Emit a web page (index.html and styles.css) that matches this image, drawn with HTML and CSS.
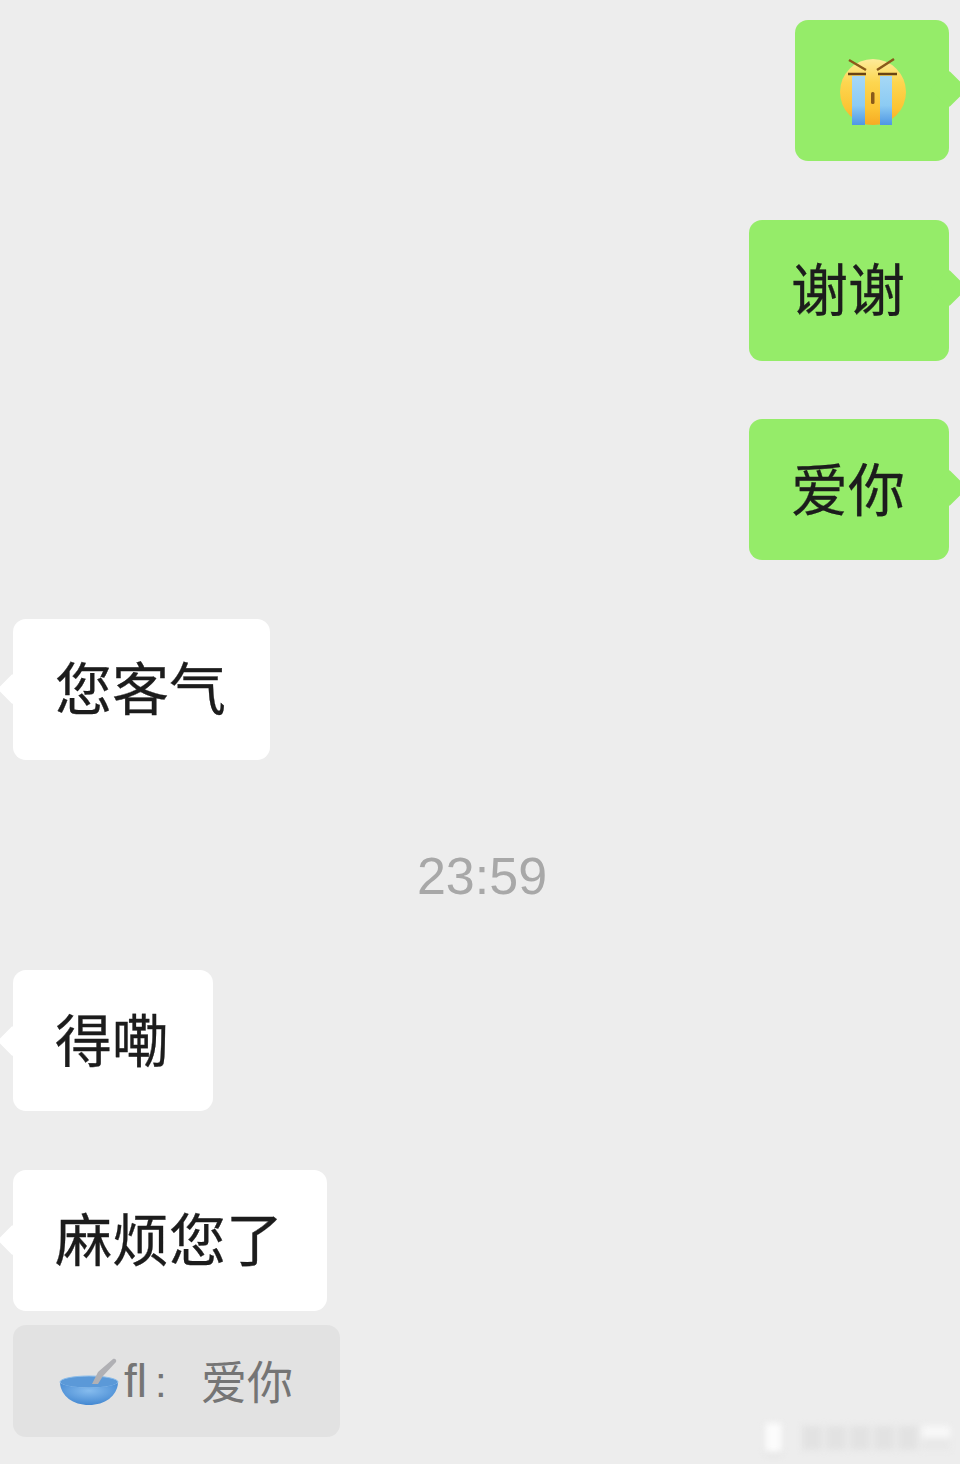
FILE: index.html
```html
<!DOCTYPE html>
<html lang="zh">

<head>
    <title>Chat</title>
    <link rel="stylesheet" href="styles.css">
</head>

<body>

    <div class="chat">
        <div class="row row-me">
            <div class="bubble bubble-me bubble-emoji">
                <svg class="emoji" viewBox="0 0 70 72" width="70" height="72">
                    <defs>
                        <linearGradient id="face" x1="0" y1="0" x2="0" y2="1">
                            <stop offset="0" stop-color="#fdeb9a"/>
                            <stop offset="0.35" stop-color="#fdd650"/>
                            <stop offset="0.75" stop-color="#fcc434"/>
                            <stop offset="1" stop-color="#f6ab24"/>
                        </linearGradient>
                        <linearGradient id="tear" x1="0" y1="0" x2="0" y2="1">
                            <stop offset="0" stop-color="#a6d8f6"/>
                            <stop offset="0.6" stop-color="#8ccbf3"/>
                            <stop offset="1" stop-color="#4f97e4"/>
                        </linearGradient>
                    </defs>
                    <circle cx="34" cy="36" r="33" fill="url(#face)"/>
                    <path d="M10 4 L27 14 M55 3 L38 14" stroke="#8a5a1a" stroke-width="2.5" fill="none"/>
                    <path d="M9 18 H27 M39 18 H58" stroke="#6b4413" stroke-width="2.5" fill="none"/>
                    <rect x="13" y="20" width="13" height="49" fill="url(#tear)"/>
                    <rect x="41" y="20" width="12" height="49" fill="url(#tear)"/>
                    <rect x="32" y="36" width="3.5" height="12" rx="1.5" fill="#8a5a1a"/>
                </svg>
            </div>
        </div>

        <div class="row row-me">
            <div class="bubble bubble-me">谢谢</div>
        </div>

        <div class="row row-me">
            <div class="bubble bubble-me">爱你</div>
        </div>

        <div class="row">
            <div class="bubble bubble-other">您客气</div>
        </div>

        <div class="time">23:59</div>

        <div class="row">
            <div class="bubble bubble-other">得嘞</div>
        </div>

        <div class="row row-quoted">
            <div class="bubble bubble-other">麻烦您了</div>
            <div class="quote">
                <svg class="bowl" viewBox="0 0 60 50" width="60" height="50">
                    <defs>
                        <radialGradient id="bowl-fill" cx="0.5" cy="0.35" r="0.7">
                            <stop offset="0" stop-color="#86bcee"/>
                            <stop offset="1" stop-color="#3f84cf"/>
                        </radialGradient>
                    </defs>
                    <ellipse cx="30" cy="25" rx="29" ry="6" fill="#5b99d8" stroke="#8cbdea" stroke-width="1"/>
                    <path d="M33 27 L39 15 L54 2 C56 1 58 3 57 5 L44 19 L39 27 Z" fill="#b0b0b4"/>
                    <path d="M1 26 C2 39 14 48 30 48 C46 48 58 39 59 26 C50 32 10 32 1 26 Z" fill="url(#bowl-fill)"/>
                </svg>
                <span class="quote-name">fl<span class="quote-colon">:</span></span><span class="quote-text">爱你</span>
            </div>
        </div>
    </div>

    <div class="watermark">
        <span class="mark-white"></span>
        <span class="mark"></span>
        <span class="mark"></span>
        <span class="mark"></span>
        <span class="mark"></span>
        <span class="mark"></span>
        <span class="mark mark-pale"></span>
    </div>

</body>

</html>
```

FILE: styles.css
```css
* {
    box-sizing: border-box;
}

body {
    margin: 0;
    height: 1464px;
    overflow: hidden;
    position: relative;
    background-color: #ededed;
    font-family: 'Noto Sans CJK SC', sans-serif;
}

.chat {
    display: flex;
    flex-direction: column;
    gap: 58.5px;
    padding: 20px 11px 0 13px;
}

.row {
    display: flex;
}

.row-me {
    justify-content: flex-end;
}

.row-quoted {
    flex-direction: column;
    align-items: flex-start;
    gap: 14.5px;
}

.bubble {
    position: relative;
    display: flex;
    align-items: center;
    height: 141px;
    padding: 0 44px 7px 42px;
    border-radius: 13px;
    font-size: 57px;
    line-height: 1;
    color: #1c1c1c;
    -webkit-text-stroke: 0.3px #1c1c1c;
}

.bubble::after {
    content: "";
    position: absolute;
    top: 50%;
    width: 22px;
    height: 22px;
    margin-top: -11px;
    border-radius: 2px;
    transform: rotate(45deg);
    background-color: inherit;
}

.bubble-me {
    background-color: #95ec69;
}

.bubble-me::after {
    right: -13px;
    width: 26px;
    height: 26px;
    margin-top: -15px;
}

.bubble-emoji {
    padding: 0 40px 0 44px;
}

.bubble-other {
    background-color: #ffffff;
}

.bubble-other::after {
    left: -11px;
}

.emoji {
    display: block;
    margin-top: 3px;
}

.time {
    height: 93.5px;
    padding: 27px 0 0 2px;
    text-align: center;
    font-family: 'Liberation Sans', sans-serif;
    font-size: 52px;
    line-height: 62px;
    color: #a8a8a8;
}

.quote {
    display: flex;
    align-items: center;
    width: 327px;
    height: 112px;
    padding-left: 46px;
    border-radius: 13px;
    background-color: #e2e2e2;
    color: #757575;
    font-size: 46px;
    line-height: 1;
}

.bowl {
    flex: none;
    margin-top: 1px;
}

.quote-name {
    width: 77px;
    margin-left: 5px;
    font-family: 'Liberation Sans', sans-serif;
}

.quote-colon {
    margin-left: 8px;
    font-size: 42px;
}

.quote-text {
    margin-bottom: 5px;
    white-space: nowrap;
}

.watermark {
    position: absolute;
    right: 10px;
    bottom: 11px;
    display: flex;
    align-items: center;
    gap: 4px;
    filter: blur(3px);
}

.mark {
    width: 20px;
    height: 24px;
    background-color: #e2e2e2;
}

.mark-pale {
    width: 28px;
    background-color: #e8e8e8;
    border-top: 12px solid #f8f8f8;
}

.mark-white {
    width: 17px;
    height: 30px;
    margin-right: 16px;
    border-radius: 3px;
    background-color: #fcfcfc;
    box-shadow: 0 1px 2px #bbbbbb;
}
```
